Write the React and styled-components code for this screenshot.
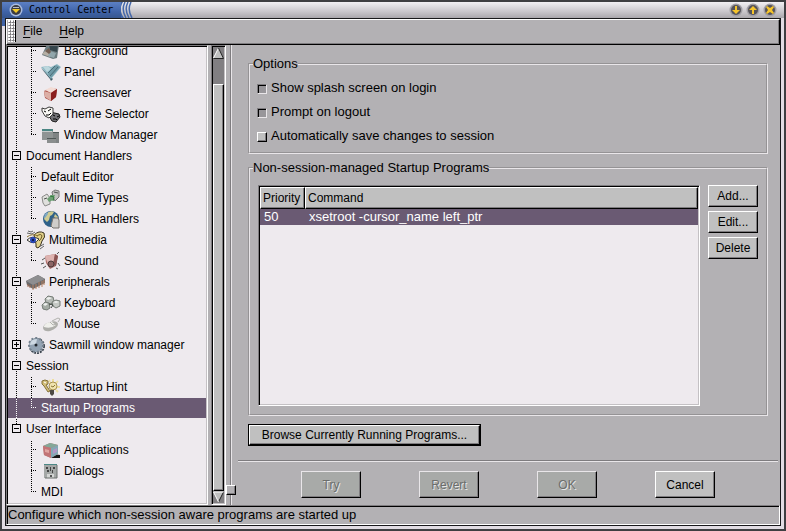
import React from "react";
import styled, { createGlobalStyle, css } from "styled-components";

const BG = "#b3b1b4";
const FACE = "#c0c0c0";
const PAPER = "#eeeaee";
const SELECTED = "#6a5a73";
const LIGHT = "#e9e6e9";
const DARK = "#7e7c7f";

const treeRows = [
    { level: 2, label: "Background", icon: "background" },
    { level: 2, label: "Panel", icon: "panel" },
    { level: 2, label: "Screensaver", icon: "screensaver" },
    { level: 2, label: "Theme Selector", icon: "theme" },
    { level: 2, label: "Window Manager", icon: "windows", end: true },
    { level: 1, label: "Document Handlers", open: true },
    { level: 2, label: "Default Editor" },
    { level: 2, label: "Mime Types", icon: "mime" },
    { level: 2, label: "URL Handlers", icon: "url", end: true },
    { level: 1, label: "Multimedia", icon: "multimedia", open: true },
    { level: 2, label: "Sound", icon: "sound", end: true },
    { level: 1, label: "Peripherals", icon: "chip", open: true },
    { level: 2, label: "Keyboard", icon: "keyboard" },
    { level: 2, label: "Mouse", icon: "mouse", end: true },
    { level: 1, label: "Sawmill window manager", icon: "saw", open: false },
    { level: 1, label: "Session", open: true },
    { level: 2, label: "Startup Hint", icon: "hint" },
    { level: 2, label: "Startup Programs", selected: true, end: true },
    { level: 1, label: "User Interface", open: true, end: true },
    { level: 2, label: "Applications", icon: "apps", last: true },
    { level: 2, label: "Dialogs", icon: "dialogs", last: true },
    { level: 2, label: "MDI", end: true, last: true },
];

const icons = {
    background: (
        <>
            <path d="M7 1l11 3-2 13-4 1-11-4z" fill="#6b7b7f" />
            <path d="M1 13l4-4 5 2-1 5z" fill="#b5aea4" />
            <path d="M8 3l9 1-1 7-7-2z" fill="#35454c" />
            <path d="M9 10l6 2-2 5-6-2z" fill="#91a6ac" />
            <path d="M4 10l4-3 2 4-2 2z" fill="#735e52" />
        </>
    ),
    panel: (
        <>
            <path d="M0 6l9 11 1 2 2-2-3-3z" fill="#3f5b66" />
            <path d="M0 5l7-1 3 1 6-3 4 3-10 12z" fill="#8fb8c3" />
            <path d="M2 5l5-1 3 3-4 3z" fill="#bcd7dd" />
            <path d="M10 7l5-4 4 2-9 11-3-4z" fill="#6f9aa6" />
            <path d="M7 11l7-7M9 14l8-9" stroke="#4b6d78" fill="none" />
        </>
    ),
    screensaver: (
        <>
            <path d="M3 8l7-3 6 1-1 8-5 4-6-3z" fill="#a6443d" />
            <path d="M4 7l6-3 6 2-6 4z" fill="#f3dcd5" />
            <path d="M3 8l7 2v8l-6-4z" fill="#dcaea5" />
            <path d="M10 10l6-4-1 8-5 4z" fill="#8b1f1f" />
        </>
    ),
    theme: (
        <>
            <path d="M9 8l9 2 1 3-4 5-4-1-3-5z" fill="#707074" stroke="#1c1c1c" />
            <path d="M12 11l2 1M16 13l2-1M12 15l3 0 1 1" stroke="#000" fill="none" />
            <path d="M1 4l3 1 4-2 4 1 0 6-4 4-4-2-3-5z" fill="#faf9f5" stroke="#3a3a3a" />
            <path d="M3 7l2 1M7 7l3-2M5 11l3 0 2-2" stroke="#000" fill="none" />
        </>
    ),
    windows: (
        <>
            <path d="M10 8h8v10h-8z" fill="#7f8384" />
            <path d="M11 7h7v1h-7z" fill="#4e5859" />
            <path d="M1 4h11v11H1z" fill="#8f9494" />
            <path d="M1 4h11v2H1z" fill="#4a8583" />
            <path d="M1 6h10v1H1z" fill="#c7cccc" />
            <path d="M6 14h9v4H6z" fill="#8a8e8e" />
            <path d="M6 13h9v1H6z" fill="#4f5757" />
        </>
    ),
    mime: (
        <>
            <path d="M1 9l5-3 3 4 0 6-5 2-2-3z" fill="#e0e0dd" stroke="#8a8a88" />
            <path d="M11 4l3-2 4 1 0 6-4 4-2-4z" fill="#c2c2c0" stroke="#777" />
            <path d="M6 11l4-4 4 0-2 5-4 2z" fill="#6e9f74" />
            <path d="M9 8l4 1-1 4" stroke="#2f7a3b" fill="none" />
            <path d="M13 4l4 1M3 11l3-1" stroke="#4d524e" fill="none" />
        </>
    ),
    url: (
        <>
            <circle cx="10" cy="10" r="8" fill="#2f6189" />
            <path d="M5 5q4-4 8-2l-2 3-2 1-1 4-2 2-3-3z" fill="#cfcb92" />
            <path d="M3 9q0-4 3-6l1 2-3 4z" fill="#7ea8c4" />
            <path d="M14 5l3 3-1 2-3-2z" fill="#cfcb92" />
            <path d="M12 9h5l1 2v8h-6l-2-2z" fill="#cfcdca" stroke="#77736e" />
        </>
    ),
    multimedia: (
        <>
            <path d="M2 1l3 1 2-1M1 3l5 1 3-2M13 17l5-3M14 19l4-3" stroke="#666" fill="none" />
            <path d="M8 5q5-5 10-2 2 4-2 8-1 5-4 7-3 0-2-4z" fill="#e2d28b" stroke="#3b3220" />
            <path d="M11 6q4-3 5 0-1 4-3 5" stroke="#6b5624" fill="none" />
            <path d="M1 10q5-5 12-1-5 7-12 1z" fill="#f8f6ec" stroke="#333" />
            <circle cx="7" cy="10" r="3" fill="#2746b8" />
            <circle cx="7" cy="10" r="1" fill="#09102e" />
            <path d="M1 7q5-4 11-1" stroke="#8c7430" fill="none" />
        </>
    ),
    sound: (
        <>
            <path d="M4 5l10-2 3 2-2 10-6 3-4-6z" fill="#b0706d" />
            <path d="M4 5l10-2-2 10-4 3z" fill="#deb3b0" />
            <path d="M14 3l3 2-2 10-3-1z" fill="#8a5452" />
            <circle cx="10" cy="13" r="3" fill="#8c6564" stroke="#4b3a3a" />
            <path d="M1 9l3-2M0 13l3-1M2 17l3-2M16 3l2-2M17 12l2 3M15 17l2 1" stroke="#555" fill="none" />
        </>
    ),
    chip: (
        <>
            <path d="M0 9L12 3l7 4v4L7 17l-6-4z" fill="#68686a" />
            <path d="M0 9L12 3l7 4-12 6z" fill="#8e8e90" />
            <path d="M7 13v5M10 12v5M13 10v6M16 9v6M18 8v5" stroke="#b98261" fill="none" />
            <path d="M2 12v3M4 13v3" stroke="#9f6b50" fill="none" />
        </>
    ),
    keyboard: (
        <>
            <path d="M4 6l3-3 5 1 1 4-3 3-5-1z" fill="#b5bab5" stroke="#747b75" />
            <path d="M1 12l3-3 4 1 1 5-3 2-4-1z" fill="#a5aca5" stroke="#747b75" />
            <path d="M11 9l4-2 4 1 0 5-4 2-3-2z" fill="#c5c9c5" stroke="#747b75" />
            <path d="M5 5l3-1 3 1-4 2zM2 11l3-1 2 1-3 2zM12 9l3-1 3 1-3 1z" fill="#eef0ee" />
            <path d="M8 11l4 1-2 3" stroke="#3d4740" fill="none" />
        </>
    ),
    mouse: (
        <>
            <path d="M2 14q0-4 7-6 7-2 8 2 0 4-8 7-6 1-7-3z" fill="#aeaeaa" />
            <path d="M3 12q2-4 8-4l4 3q-5 4-12 2z" fill="#efefeb" />
            <path d="M9 8l3 3 4-1M11 7l6-3 2 1-2 3" stroke="#b2b2ae" fill="none" />
        </>
    ),
    saw: (
        <>
            <circle cx="11" cy="11" r="7" fill="none" stroke="#3c454f" strokeWidth="2" strokeDasharray="2 1" />
            <circle cx="10" cy="10" r="7" fill="#93a3b3" />
            <circle cx="10" cy="10" r="7" fill="none" stroke="#74818e" strokeWidth="2" strokeDasharray="2 2" />
            <path d="M4 10q0-6 7-6l-1 5z" fill="#cdd8e2" />
            <circle cx="10" cy="10" r="1.500" fill="#20262d" />
        </>
    ),
    hint: (
        <>
            <path d="M12 2v3M17 4l-2 2M19 10h-3M17 15l-2-2M8 3l1 2" stroke="#eedfa0" strokeWidth="2" fill="none" />
            <circle cx="12" cy="9" r="4" fill="#efe3ae" stroke="#a8924e" />
            <path d="M9 13h4v4l-2 2-2-2z" fill="#4d4a44" />
            <path d="M1 4l3-1 3 1 0 3-2 1 4 6-2 1-4-6-2-2z" fill="#d1bd77" stroke="#85713a" />
            <path d="M3 5l2 1" stroke="#fff" />
            <path d="M10 9l2 1 2-2" stroke="#8a7535" fill="none" />
        </>
    ),
    apps: (
        <>
            <path d="M12 14l7 1v3h-9z" fill="#151515" />
            <path d="M2 6l7-3 8 2v9l-7 4-7-3z" fill="#b77b78" />
            <path d="M2 6l7-3 8 2-7 3z" fill="#84a898" />
            <path d="M2 6l8 2v10l-7-3z" fill="#c27476" />
            <path d="M10 8l7-3v9l-7 4z" fill="#83a8b4" />
            <path d="M4 9l4 1v3l-4-1z" fill="#e0a5a1" />
            <path d="M12 10l4-2v4l-4 2z" fill="#b096c4" />
        </>
    ),
    dialogs: (
        <>
            <path d="M3 3h13v14H3z" fill="#a4a7a6" />
            <path d="M3 3h13v1H3z" fill="#4c8886" />
            <path d="M5 6h2v2H5zM9 6h1v4H9zM12 6h2v2h-2zM6 9h2v2H6zM11 9h1v3h-1z" fill="#444" />
            <path d="M6 13h7v4H6z" fill="#d4d5d4" />
            <path d="M9 14h2v2H9z" fill="#555" />
            <path d="M16 4v13H4" stroke="#6b6e6d" fill="none" />
        </>
    ),
};

const TitleGem = () => (
    <svg width="14" height="14" viewBox="0 0 14 14" aria-hidden="true">
        <circle cx="7" cy="7" r="6.500" fill="#a9bbe0" />
        <circle cx="7" cy="7" r="5" fill="#3a3c42" />
        <path d="M3 6h8L7 10z" fill="#f4ca2a" />
        <path d="M4 4h6v1H4z" fill="#b9bcc6" />
    </svg>
);

const windowGlyphs = {
    Minimize: "M6 3h2v4h3l-4 4-4-4h3z",
    Maximize: "M6 11h2V7h3L7 3 3 7h3z",
    Close: "M4 3l3 2 3-2 1 1-2 3 2 3-1 1-3-2-3 2-1-1 2-3-2-3z",
};

const App = () => {
    return (
        <>
            <GlobalStyle />
            <Window>
                <TitleBar>
                    <TitleTab>
                        <TitleGem />
                        <Title>Control Center</Title>
                    </TitleTab>
                    <TitleWaves width="12" height="16" viewBox="0 0 12 16" aria-hidden="true">
                        <path d="M0 0h2q-5 8 1 16H0z" fill="#4164a8" />
                        <path d="M4 0q-4 8 1 16M7 0q-4 8 1 16M10 0q-4 8 1 16" fill="none" stroke="#4668aa" strokeWidth="1.500" />
                    </TitleWaves>
                    <WindowButtons>
                        {Object.keys(windowGlyphs).map((name) => (
                            <WindowButton key={name} type="button" aria-label={name}>
                                <svg width="14" height="14" viewBox="0 0 14 14">
                                    <circle cx="7" cy="7" r="6.500" fill="#a19fa5" />
                                    <circle cx="7" cy="7" r="5" fill="#55535a" />
                                    <path d={windowGlyphs[name]} fill="#f5c42c" />
                                </svg>
                            </WindowButton>
                        ))}
                    </WindowButtons>
                </TitleBar>
                <Client>
                    <MenuBar>
                        <MenuGrip />
                        <MenuButton type="button"><u>F</u>ile</MenuButton>
                        <MenuButton type="button"><u>H</u>elp</MenuButton>
                    </MenuBar>
                    <Panes>
                        <TreeFrame>
                            <Tree role="tree" aria-label="Capplets">
                                {treeRows.map((row, i) => (
                                    <TreeRow key={row.label} role="treeitem" aria-level={row.level} aria-selected={!!row.selected} $selected={row.selected}>
                                        <Rail $odd={i % 2} $half={row.level === 1 && row.end} $none={row.last}>
                                            {row.level === 1 && (
                                                <Expander type="button" aria-label={row.open ? "Collapse" : "Expand"} $open={row.open} />
                                            )}
                                        </Rail>
                                        {row.level === 2 && <Rail $odd={i % 2} $half={row.end} $branch />}
                                        {row.icon && (
                                            <TreeIcon width="20" height="20" viewBox="0 0 20 20" aria-hidden="true">
                                                {icons[row.icon]}
                                            </TreeIcon>
                                        )}
                                        <TreeLabel>{row.label}</TreeLabel>
                                    </TreeRow>
                                ))}
                            </Tree>
                        </TreeFrame>
                        <ScrollBar>
                            <ScrollArrow type="button" aria-label="Scroll up">
                                <svg width="11" height="12" viewBox="0 0 11 12">
                                    <path d="M5.500 1L10.500 11H.5z" fill={FACE} />
                                    <path d="M5.500 1L.5 11" stroke="#fff" />
                                    <path d="M5.500 1l5 10.500H.5" stroke="#222" fill="none" />
                                </svg>
                            </ScrollArrow>
                            <ScrollThumb />
                            <ScrollArrow type="button" aria-label="Scroll down">
                                <svg width="11" height="12" viewBox="0 0 11 12">
                                    <path d="M.5 1h10l-5 10z" fill={FACE} />
                                    <path d="M10.500 1l-5 10" stroke="#222" />
                                    <path d="M10.500 1H.5l5 10" stroke="#fff" fill="none" />
                                </svg>
                            </ScrollArrow>
                        </ScrollBar>
                        <Sash>
                            <SashHandle />
                        </Sash>
                        <Capplet>
                            <Settings>
                                <Group>
                                    <Legend>Options</Legend>
                                    <OptionList>
                                        <Option>
                                            <CheckBox type="checkbox" defaultChecked />
                                            Show splash screen on login
                                        </Option>
                                        <Option>
                                            <CheckBox type="checkbox" defaultChecked />
                                            Prompt on logout
                                        </Option>
                                        <Option>
                                            <CheckBox type="checkbox" />
                                            Automatically save changes to session
                                        </Option>
                                    </OptionList>
                                </Group>
                                <Group $grow>
                                    <Legend>Non-session-managed Startup Programs</Legend>
                                    <Programs>
                                        <ListFrame>
                                            <Table>
                                                <thead>
                                                    <tr>
                                                        <HeadCell $narrow>Priority</HeadCell>
                                                        <HeadCell>Command</HeadCell>
                                                    </tr>
                                                </thead>
                                                <tbody>
                                                    <tr>
                                                        <Cell>50</Cell>
                                                        <Cell>xsetroot -cursor_name left_ptr</Cell>
                                                    </tr>
                                                </tbody>
                                            </Table>
                                        </ListFrame>
                                        <SideButtons>
                                            <Button type="button">Add...</Button>
                                            <Button type="button">Edit...</Button>
                                            <Button type="button">Delete</Button>
                                        </SideButtons>
                                    </Programs>
                                </Group>
                                <DefaultRing>
                                    <Button type="button" $wide>Browse Currently Running Programs...</Button>
                                </DefaultRing>
                            </Settings>
                            <Actions>
                                <Button type="button" $tall disabled>Try</Button>
                                <Button type="button" $tall disabled>Revert</Button>
                                <Button type="button" $tall disabled>OK</Button>
                                <Button type="button" $tall>Cancel</Button>
                            </Actions>
                        </Capplet>
                    </Panes>
                    <StatusBar>Configure which non-session aware programs are started up</StatusBar>
                </Client>
            </Window>
        </>
    );
};

const GlobalStyle = createGlobalStyle`
    * {
        box-sizing: border-box;
    }
    body {
        margin: 0;
        background: #3c3c3e;
    }
    body, button, input {
        font-family: "Liberation Sans", Arial, sans-serif;
        font-size: 12px;
        line-height: 16px;
        color: #000;
    }
    svg {
        display: block;
    }
`;

// 안쪽으로 들어간 테두리
const sunken = css`
    border: 1px solid;
    border-color: ${DARK} #fff #fff ${DARK};
    box-shadow: inset 1px 1px 0 #000, inset -1px -1px 0 #c4c1c4;
`;

// 튀어나온 테두리
const raised = css`
    border: 1px solid;
    border-color: #fff #000 #000 #fff;
    box-shadow: inset -1px -1px 0 ${DARK};
`;

const Window = styled.div`
    min-height: 100vh;
    display: flex;
    flex-direction: column;
    border: 2px solid #3f3f42;
    background: linear-gradient(#3f62a6, #3f62a6) 0 0 / 3px 24px no-repeat, #e2dde4;
`;

const TitleBar = styled.header`
    height: 16px;
    display: flex;
    align-items: center;
    background: linear-gradient(#f2f0f3, #c9c6cb 60%, #aaa7ac);
`;

const TitleTab = styled.div`
    height: 16px;
    display: flex;
    align-items: center;
    gap: 6px;
    padding-left: 7px;
    background: linear-gradient(#5c80c4, #3f63a8 60%, #36568f);
`;

const Title = styled.h1`
    margin: 0;
    padding-right: 8px;
    font-family: "DejaVu Sans Mono", monospace;
    font-size: 10px;
    font-weight: 400;
    line-height: 16px;
`;

const TitleWaves = styled.svg`
    flex: none;
`;

const WindowButtons = styled.div`
    margin-left: auto;
    padding-right: 7px;
    display: flex;
    gap: 3px;
`;

const WindowButton = styled.button`
    width: 14px;
    height: 14px;
    padding: 0;
    border: 0;
    background: none;
`;

const Client = styled.div`
    flex: 1;
    display: flex;
    flex-direction: column;
    margin: 0 3px 3px;
    border: 1px solid #19191b;
    background: ${BG};
`;

const MenuBar = styled.nav`
    height: 26px;
    display: flex;
    align-items: center;
    gap: 17px;
    padding: 0 0 2px 1px;
    ${raised}
`;

const MenuGrip = styled.div`
    width: 8px;
    height: 22px;
    margin-right: -10px;
    border-right: 1px solid #000;
    background-color: ${BG};
    background-image: radial-gradient(circle at 1px 1px, #fff 1px, transparent 1px),
        radial-gradient(circle at 2px 2px, ${DARK} 1px, transparent 1px);
    background-size: 3px 3px;
`;

const MenuButton = styled.button`
    padding: 0;
    border: 0;
    background: none;

    u {
        text-underline-offset: 2px;
    }
`;

const Panes = styled.div`
    flex: 1;
    display: flex;
`;

const TreeFrame = styled.div`
    width: 202px;
    flex: none;
    margin-right: 3px;
    padding: 1px;
    overflow: hidden;
    background: ${PAPER};
    ${sunken}
`;

const Tree = styled.ul`
    margin: -6px 0 0;
    padding: 0;
    list-style: none;
`;

const TreeRow = styled.li`
    height: 21px;
    display: flex;
    align-items: center;
    padding-bottom: 1px;
    color: ${(props) => (props.$selected ? "#fff" : "#000")};
    background-color: ${(props) => (props.$selected ? SELECTED : "transparent")};
    background-clip: content-box;
`;

const Rail = styled.span`
    width: 15px;
    height: 21px;
    flex: none;
    display: flex;
    align-items: center;
    margin-bottom: -1px;
    padding: 0 0 2px 4px;
    background-repeat: no-repeat;
    background-image: repeating-linear-gradient(
            ${(props) => (props.$odd ? "transparent 0 1px, currentColor 1px 2px" : "currentColor 0 1px, transparent 1px 2px")}
        ),
        repeating-linear-gradient(90deg, currentColor 0 1px, transparent 1px 2px);
    background-position: 8px 0, 8px 9px;
    background-size: ${(props) => (props.$none ? "0 0" : props.$half ? "1px 10px" : "1px 21px")},
        ${(props) => (props.$branch ? "6px 1px" : "0 0")};
`;

const Expander = styled.button`
    width: 9px;
    height: 9px;
    flex: none;
    padding: 0;
    border: 1px solid #000;
    background: linear-gradient(#000, #000) center / 5px 1px no-repeat,
        linear-gradient(#000, #000) center / ${(props) => (props.$open ? "0 0" : "1px 5px")} no-repeat, ${PAPER};
`;

const TreeIcon = styled.svg`
    flex: none;
    margin-left: 3px;
`;

const TreeLabel = styled.span`
    padding-left: 3px;
    white-space: nowrap;
`;

const ScrollBar = styled.div`
    width: 15px;
    flex: none;
    display: flex;
    flex-direction: column;
    padding: 1px;
    background: #817f82;
    ${sunken}
`;

const ScrollArrow = styled.button`
    width: 11px;
    height: 12px;
    padding: 0;
    border: 0;
    background: none;
`;

const ScrollThumb = styled.div`
    flex: 1;
    margin-top: 25px;
    background: ${FACE};
    ${raised}
`;

const Sash = styled.div`
    width: 12px;
    flex: none;
    position: relative;
    background: linear-gradient(90deg, transparent 4px, ${DARK} 4px 5px, ${LIGHT} 5px 6px, transparent 6px);
`;

const SashHandle = styled.div`
    width: 10px;
    height: 10px;
    position: absolute;
    left: 0;
    bottom: 10px;
    background: ${BG};
    ${raised}
`;

const Capplet = styled.main`
    flex: 1;
    min-width: 0;
    display: flex;
    flex-direction: column;
    padding: 11px 2px 0 0;
    font-size: 13px;
`;

const Settings = styled.div`
    flex: 1;
    display: flex;
    flex-direction: column;
    align-items: stretch;
    padding: 0 10px 14px;
`;

const Group = styled.fieldset`
    min-width: 0;
    margin: 0 0 6px;
    padding: 0 3px;
    border: 2px groove ${LIGHT};
    flex: ${(props) => (props.$grow ? "1" : "none")};
    display: flex;
    flex-direction: column;
`;

const Legend = styled.legend`
    padding: 0;
`;

const OptionList = styled.div`
    display: flex;
    flex-direction: column;
    padding: 4px 4px 4px;
`;

const Option = styled.label`
    height: 24px;
    display: flex;
    align-items: center;
    gap: 4px;
`;

const CheckBox = styled.input`
    appearance: none;
    width: 10px;
    height: 10px;
    margin: 2px 0 0;
    background: ${FACE};
    ${raised}

    &:checked {
        background: #98969a;
        border-color: ${DARK} ${LIGHT} ${LIGHT} ${DARK};
        box-shadow: inset 1px 1px 0 #000;
    }
`;

const Programs = styled.div`
    flex: 1;
    display: flex;
    gap: 8px;
    padding: 9px 5px 8px;
`;

const ListFrame = styled.div`
    flex: 1;
    padding: 1px;
    background: ${PAPER};
    ${sunken}
`;

const Table = styled.table`
    width: 100%;
    border-spacing: 0;
    text-align: left;

    tbody tr {
        color: #fff;
        background: ${SELECTED};
    }
`;

const HeadCell = styled.th`
    width: ${(props) => (props.$narrow ? "45px" : "auto")};
    height: 22px;
    padding: 0 2px;
    font-size: 12px;
    font-weight: 400;
    background: ${FACE};
    ${raised}
`;

const Cell = styled.td`
    height: 16px;
    padding: 0 4px;
    line-height: 16px;
`;

const SideButtons = styled.div`
    width: 50px;
    display: flex;
    flex-direction: column;
    gap: 4px;
`;

const Button = styled.button`
    width: ${(props) => (props.$wide ? "231px" : props.$tall ? "60px" : "auto")};
    height: ${(props) => (props.$tall ? "27px" : props.$wide ? "20px" : "22px")};
    padding: 0;
    background: ${FACE};
    ${raised}

    &:disabled {
        color: #6c6e6c;
        background: #a8aaa8;
        border-color: ${LIGHT} #000 #000 ${LIGHT};
        text-shadow: 1px 1px 0 #e6e6e6;
    }
`;

const DefaultRing = styled.div`
    align-self: flex-start;
    margin-top: 2px;
    border: 1px solid #000;
`;

const Actions = styled.footer`
    display: grid;
    grid-template-columns: repeat(4, 1fr);
    justify-items: center;
    padding: 10px 34px 7px;
    border-top: 1px solid ${DARK};
    box-shadow: inset 0 1px 0 ${LIGHT};
`;

const StatusBar = styled.div`
    height: 20px;
    padding: 1px 1px 0;
    ${sunken}
    box-shadow: inset 1px 1px 0 #000;
    font-size: 13px;
`;

export default App;
